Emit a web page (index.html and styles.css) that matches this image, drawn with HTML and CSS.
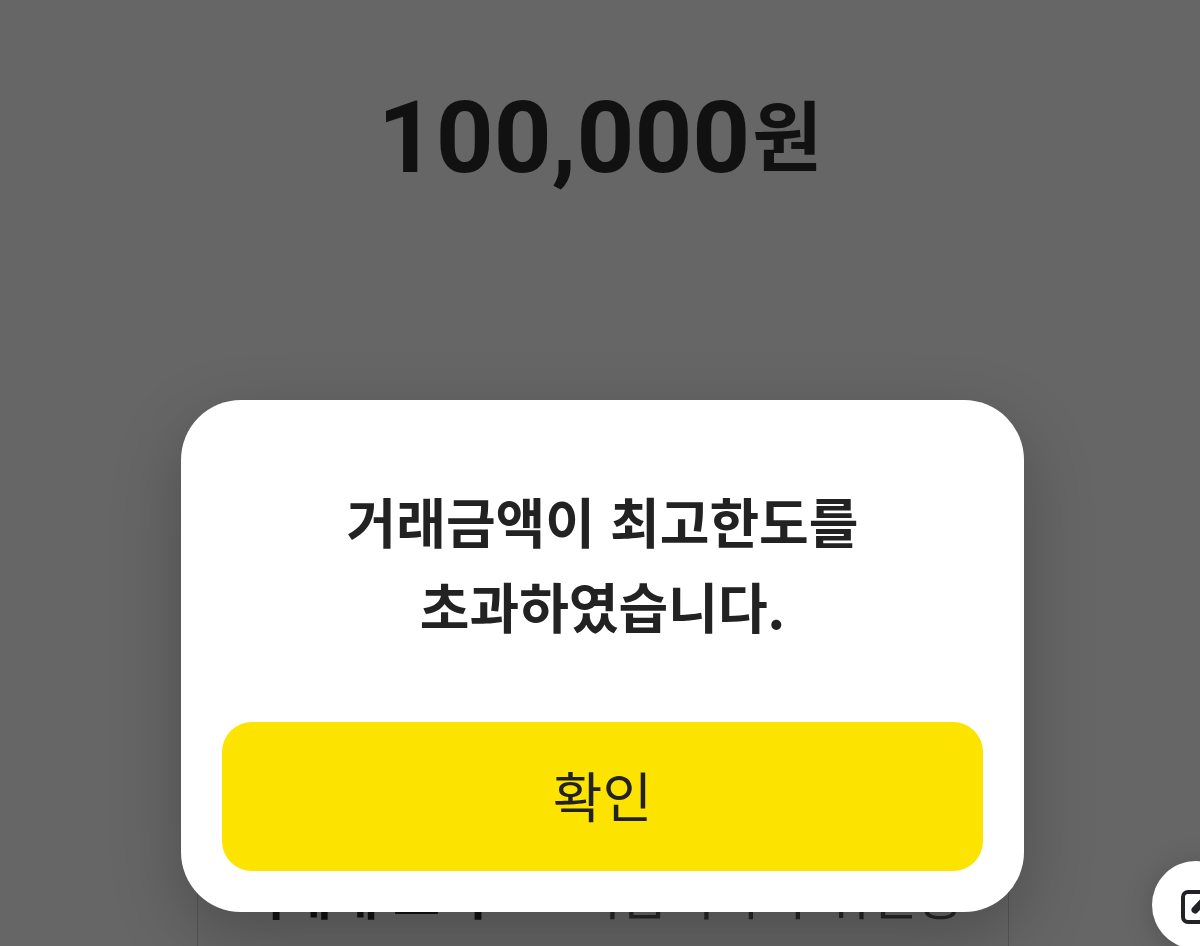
FILE: index.html
```
<!DOCTYPE html>
<html lang="ko">

<head>
    <meta charset="UTF-8">
    <meta name="viewport" content="width=device-width, initial-scale=1.0">
    <title>이체</title>
    <link rel="stylesheet" href="styles.css">
</head>

<body>
    <main class="page">
        <h1 class="amount">100,000<span class="unit">원</span></h1>
        <div class="card">
            <strong class="card-title">거래내 보기</strong>
            <span class="card-text">지급이자가 위신용</span>
        </div>
    </main>

    <div class="overlay">
        <div class="modal" role="alertdialog" aria-modal="true" aria-labelledby="message">
            <p class="message" id="message">거래금액이 최고한도를<br>초과하였습니다.</p>
            <button type="button" class="confirm">확인</button>
        </div>
    </div>

    <button type="button" class="edit" aria-label="편집">
        <svg class="edit-icon" viewBox="0 0 40 40" fill="none" stroke="#202226" stroke-width="4">
            <path d="M24 7H12a5 5 0 0 0-5 5v20a5 5 0 0 0 5 5h20a5 5 0 0 0 5-5V20" />
            <path d="M19 25L34 9" stroke-width="7" stroke-linecap="round" />
        </svg>
    </button>
</body>

</html>
```
FILE: styles.css
```
* {
    box-sizing: border-box;
}

body {
    margin: 0;
    background-color: #666666;
    font-family: Roboto, "Noto Sans CJK KR", sans-serif;
}

.page {
    height: 100vh;
    padding: 78px 191px 0 197px;
    overflow: hidden;
}

.amount {
    margin: 0;
    padding-right: 6px;
    font-size: 101px;
    line-height: 120px;
    text-align: center;
    color: #111111;
}

.unit {
    margin-left: 2px;
    font-size: 76px;
    line-height: 1;
    vertical-align: 7px;
}

.card {
    display: flex;
    justify-content: space-between;
    margin-top: 600px;
    padding: 64px 44px 80px 40px;
    border: 1px solid #545454;
    font-family: "Noto Sans CJK KR", sans-serif;
    font-size: 51px;
    line-height: 60px;
    white-space: nowrap;
}

.card-title {
    color: #111111;
}

.card-text {
    color: #262626;
}

/* 알림창 */
.overlay {
    position: fixed;
    inset: 0;
    padding: 400px 176px 0 181px;
}

.modal {
    padding: 78px 41px 41px;
    border-radius: 60px;
    background-color: #ffffff;
    box-shadow: 0 24px 70px rgba(0, 0, 0, 0.24);
}

.message {
    margin: 0 0 74px;
    font-family: "Noto Sans CJK KR", sans-serif;
    font-size: 54px;
    font-weight: bold;
    line-height: 85px;
    text-align: center;
    color: #222222;
}

.confirm {
    display: block;
    width: 100%;
    height: 149px;
    padding: 0 0 4px;
    border: 0;
    border-radius: 30px;
    background-color: #fde300;
    font-family: "Noto Sans CJK KR", sans-serif;
    font-size: 54px;
    color: #222222;
}

.edit {
    position: fixed;
    right: -40px;
    bottom: -3px;
    width: 88px;
    height: 88px;
    padding: 0;
    border: 0;
    border-radius: 50%;
    background-color: #ffffff;
    box-shadow: 0 4px 30px rgba(0, 0, 0, 0.2);
}

.edit-icon {
    display: block;
    width: 40px;
    margin: 0 auto;
}
```
